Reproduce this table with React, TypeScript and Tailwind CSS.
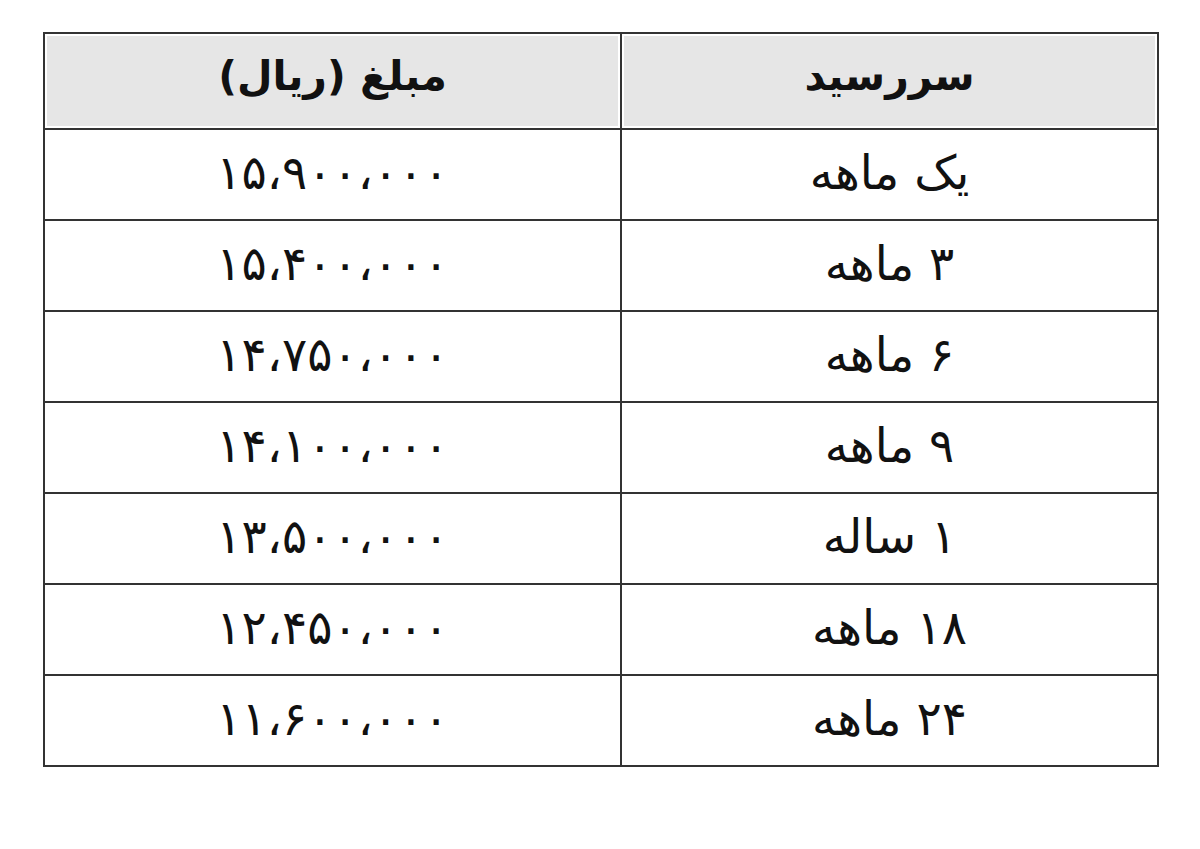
import React from "react";

const rows: [string, string][] = [
  ["۱۵،۹۰۰،۰۰۰", "یک ماهه"],
  ["۱۵،۴۰۰،۰۰۰", "۳ ماهه"],
  ["۱۴،۷۵۰،۰۰۰", "۶ ماهه"],
  ["۱۴،۱۰۰،۰۰۰", "۹ ماهه"],
  ["۱۳،۵۰۰،۰۰۰", "۱ ساله"],
  ["۱۲،۴۵۰،۰۰۰", "۱۸ ماهه"],
  ["۱۱،۶۰۰،۰۰۰", "۲۴ ماهه"],
];

export default function App() {
  return (
    <div
      className="w-[1200px] h-[849px] bg-white pl-[43px] pt-[32px]"
      style={{ fontFamily: '"DejaVu Sans", "Noto Sans", sans-serif' }}
    >
      <div className="w-[1116px] grid grid-cols-[577px_537px] border-l-2 border-t-2 border-[#333] text-[#111]">
        <div className="h-[96px] border-r-2 border-b-2 border-[#333] p-[2px] bg-white">
          <div dir="rtl" className="h-full bg-[#e6e6e6] flex items-center justify-center text-[41px] font-bold pb-[8px]">
            مبلغ (ریال)
          </div>
        </div>
        <div className="h-[96px] border-r-2 border-b-2 border-[#333] p-[2px] bg-white">
          <div dir="rtl" className="h-full bg-[#e6e6e6] flex items-center justify-center text-[41px] font-bold pb-[8px]">
            سررسید
          </div>
        </div>
        {rows.map(([amt, term], i) => (
          <React.Fragment key={i}>
            <div
              dir="rtl"
              className="h-[91px] border-r-2 border-b-2 border-[#333] flex items-center justify-center text-[47px] leading-none pb-[4px]"
            >
              {amt}
            </div>
            <div
              dir="rtl"
              className="h-[91px] border-r-2 border-b-2 border-[#333] flex items-center justify-center text-[47px] leading-none pb-[4px]"
            >
              {term}
            </div>
          </React.Fragment>
        ))}
      </div>
    </div>
  );
}
